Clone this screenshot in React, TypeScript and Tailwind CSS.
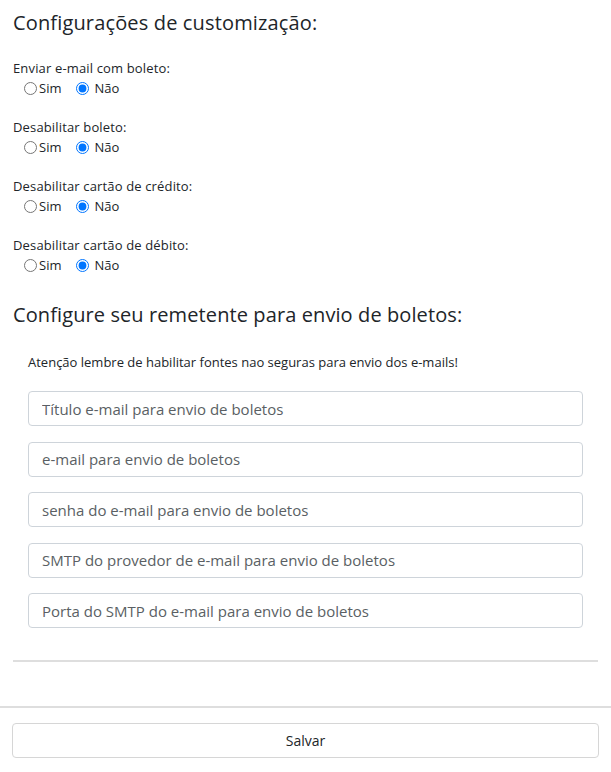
import React, { useState } from 'react';

const font = { fontFamily: '"Open Sans", "Liberation Sans", sans-serif' };

const OPTIONS = [
    { key: 'emailBoleto', label: 'Enviar e-mail com boleto:' },
    { key: 'disableBoleto', label: 'Desabilitar boleto:' },
    { key: 'disableCredito', label: 'Desabilitar cartão de crédito:' },
    { key: 'disableDebito', label: 'Desabilitar cartão de débito:' },
];

const FIELDS = [
    'Título e-mail para envio de boletos',
    'e-mail para envio de boletos',
    'senha do e-mail para envio de boletos',
    'SMTP do provedor de e-mail para envio de boletos',
    'Porta do SMTP do e-mail para envio de boletos',
];

const App: React.FC = () => {
    const [values, setValues] = useState<Record<string, boolean>>({
        emailBoleto: false,
        disableBoleto: false,
        disableCredito: false,
        disableDebito: false,
    });

    return (
        <div className="w-[611px] min-h-[772px] bg-white text-[#212529]" style={font}>
            <div className="px-[13px]">
                <h2 className="pt-[10px] text-[20px] leading-[26px] font-normal tracking-[0.15px]">Configurações de customização:</h2>

                <div className="mt-[23px] flex flex-col gap-[20px]">
                    {OPTIONS.map(opt => (
                        <div key={opt.key}>
                            <div className="text-[13px] leading-[19px] tracking-[0.15px]">{opt.label}</div>
                            <div className="flex items-center pl-[10px] text-[13px] leading-[20px]">
                                <label className="flex items-center">
                                    <input
                                        type="radio"
                                        className="m-0 ml-[1px] w-[13px] h-[13px]"
                                        checked={values[opt.key]}
                                        onChange={() => setValues({ ...values, [opt.key]: true })}
                                    />
                                    <span className="ml-[2px]">Sim</span>
                                </label>
                                <label className="flex items-center ml-[15px]">
                                    <input
                                        type="radio"
                                        className="m-0 w-[13px] h-[13px]"
                                        checked={!values[opt.key]}
                                        onChange={() => setValues({ ...values, [opt.key]: false })}
                                    />
                                    <span className="ml-[5px]">Não</span>
                                </label>
                            </div>
                        </div>
                    ))}
                </div>

                <h2 className="mt-[27px] text-[20px] leading-[26px] font-normal tracking-[0.1px]">Configure seu remetente para envio de boletos:</h2>

                <div className="px-[15px]">
                    <p className="mt-[25px] text-[13px] leading-[18px]">Atenção lembre de habilitar fontes nao seguras para envio dos e-mails!</p>
                    <div className="mt-[20px] flex flex-col gap-[15.5px]">
                        {FIELDS.map(f => (
                            <input
                                key={f}
                                type="text"
                                placeholder={f}
                                className="h-[35px] w-full rounded-[4px] border border-[#ced4da] px-[13px] text-[15px] text-[#495057] placeholder:text-[#5a5f64] outline-none"
                            />
                        ))}
                    </div>
                </div>

                <hr className="mt-[32px] border-0 border-t-2 border-[#dedede]" />
            </div>

            <div className="mt-[44px] border-t-2 border-[#dedede] px-[12px] pt-[15px]">
                <button className="h-[35px] w-full rounded-[4px] border border-[#d6d6d6] bg-white text-[14px] text-[#212529]">
                    Salvar
                </button>
            </div>
        </div>
    );
};

export default App;
